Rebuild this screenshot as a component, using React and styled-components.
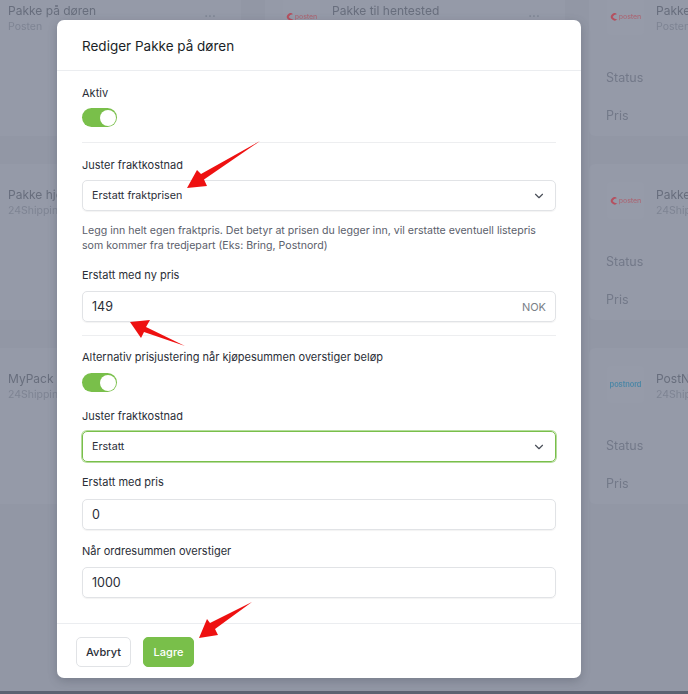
import styled, { createGlobalStyle } from "styled-components";
import { ChevronDown } from "lucide-react";

const GlobalStyle = createGlobalStyle`
  html, body {
    margin: 0;
    padding: 0;
    height: 100%;
    overflow: hidden;
    background: #9297a5;
  }
  * {
    box-sizing: border-box;
  }
`;

const Page = styled.div`
  position: relative;
  width: 688px;
  height: 694px;
  overflow: hidden;
  background: #9297a5;
  font-family: Inter, "Liberation Sans", sans-serif;
`;

const CardGrid = styled.div`
  display: grid;
  grid-template-columns: repeat(3, 300px);
  grid-auto-rows: 156px;
  gap: 28px 24px;
  width: 948px;
  height: 711px;
  margin: -20px 0 0 -59px;
  filter: blur(0.5px);
`;

const BottomBand = styled.div`
  height: 3px;
  background: #5c6271;
`;

const Card = styled.div`
  background: #959aa8;
  border-radius: 6px;
`;

const CardHead = styled.div`
  display: flex;
  align-items: flex-start;
  height: 84px;
  padding: 18px 18px 0;
`;

const LogoBox = styled.div`
  display: flex;
  align-items: center;
  justify-content: center;
  gap: 1px;
  flex: none;
  width: 37px;
  height: 37px;
  margin-right: 12px;
  background: #969ba9;
  border-radius: 4px;
`;

const LogoText = styled.span`
  font-size: ${(p) => p.$size}px;
  font-weight: ${(p) => p.$weight};
  letter-spacing: -0.1px;
  color: ${(p) => p.$color};
`;

const CardTitles = styled.div`
  flex: 1;
  min-width: 0;
  padding-top: 5px;
`;

const CardTitle = styled.div`
  font-size: 12px;
  line-height: 16px;
  color: #686e7d;
  white-space: nowrap;
`;

const CardSub = styled.div`
  margin-top: 1px;
  font-size: 10.5px;
  line-height: 14px;
  color: #7e8493;
  white-space: nowrap;
`;

const Dots = styled.div`
  flex: none;
  margin: 13px 7px 0 0;
  font-size: 6px;
  line-height: 10px;
  letter-spacing: 0.5px;
  color: #7e8493;
`;

const CardMeta = styled.div`
  padding: 6px 17px 0;
  font-size: 12.5px;
  line-height: 16px;
  color: #737989;
`;

const MetaRow = styled.div`
  margin-bottom: 22px;
`;

const Modal = styled.div`
  position: absolute;
  left: 57px;
  top: 20px;
  width: 524px;
  height: 658px;
  background: #fff;
  border-radius: 7px;
  box-shadow: 0 3px 10px rgba(60, 65, 80, 0.3);
`;

const ModalHeader = styled.div`
  display: flex;
  align-items: center;
  height: 51px;
  padding: 2px 25px 0;
  border-bottom: 1px solid #ebedf0;
  font-size: 13.5px;
  color: #1b1f27;
`;

const ModalBody = styled.div`
  height: 552px;
  padding: 14px 25px 0;
`;

const Field = styled.div`
  margin-top: ${(p) => p.$top || 0}px;
`;

const Label = styled.div`
  margin-bottom: ${(p) => p.$gap || 8}px;
  font-size: 11px;
  line-height: 16px;
  color: #2a2e37;
  white-space: nowrap;
`;

const Toggle = styled.div`
  display: flex;
  justify-content: flex-end;
  align-items: center;
  width: 35px;
  height: 19px;
  padding: 1px;
  border-radius: 10px;
  background: #79bf4a;
`;

const ToggleKnob = styled.div`
  width: 16px;
  height: 16px;
  border-radius: 50%;
  background: #fff;
`;

const Divider = styled.div`
  height: 1px;
  margin: ${(p) => p.$top}px 0 ${(p) => p.$bottom}px;
  background: #edeef0;
`;

const SelectBox = styled.div`
  display: flex;
  align-items: center;
  justify-content: space-between;
  width: 474px;
  height: 31px;
  padding: 0 9px;
  border: 1px solid ${(p) => (p.$focused ? "#79bf4a" : "#e1e3e6")};
  border-radius: 5px;
  box-shadow: ${(p) => (p.$focused ? "0 0 0 1px rgba(121, 191, 74, 0.55)" : "0 1px 1px rgba(0, 0, 0, 0.05)")};
  font-size: 10.7px;
  color: #2a2e37;
`;

const InputBox = styled.div`
  display: flex;
  align-items: center;
  width: 474px;
  height: 31px;
  padding: 0 9px;
  border: 1px solid #e1e3e6;
  border-radius: 5px;
  box-shadow: 0 1px 1px rgba(0, 0, 0, 0.05);
`;

const ValueInput = styled.input`
  flex: 1;
  min-width: 0;
  padding: 0;
  border: none;
  outline: none;
  background: transparent;
  font-family: inherit;
  font-size: 12.5px;
  color: #2a2e37;
`;

const Suffix = styled.span`
  font-size: 11px;
  color: #7b7f88;
`;

const HelpText = styled.p`
  margin: 12px 0 14px;
  font-size: 10.6px;
  line-height: 15px;
  color: #5b606b;
`;

const ModalFooter = styled.div`
  display: flex;
  align-items: flex-start;
  gap: 12px;
  padding: 13px 19px;
  border-top: 1px solid #ebedf0;
`;

const Button = styled.button`
  height: 30px;
  padding: 0;
  width: ${(p) => p.$width}px;
  border: 1px solid ${(p) => (p.$primary ? "#79bf4a" : "#e1e3e6")};
  border-radius: 5px;
  background: ${(p) => (p.$primary ? "#79bf4a" : "#fff")};
  color: ${(p) => (p.$primary ? "#fff" : "#2a2e37")};
  font-family: inherit;
  font-size: 11px;
  font-weight: 500;
`;

const ArrowSvg = styled.svg`
  position: absolute;
  left: 0;
  top: 0;
  width: 688px;
  height: 694px;
  pointer-events: none;
`;

const cards = [
  { title: "Pakke på døren", sub: "Posten", logo: "posten" },
  { title: "Pakke til hentested", sub: "Posten", logo: "posten" },
  { title: "Pakke i postkassen", sub: "Posten", logo: "posten" },
  { title: "Pakke hjem", sub: "24Shipping", logo: "posten" },
  { title: "Pakke til hentested", sub: "24Shipping", logo: "posten" },
  { title: "Pakke i postkassen", sub: "24Shipping", logo: "posten" },
  { title: "MyPack Home", sub: "24Shipping", logo: "posten" },
  { title: "MyPack Collect", sub: "24Shipping", logo: "postnord" },
  { title: "PostNord Hjem", sub: "24Shipping", logo: "postnord" },
];

function Logo({ name }) {
  if (name === "postnord") {
    return (
      <LogoBox>
        <LogoText $color="#4d87a6" $size={7.5} $weight={600}>postnord</LogoText>
      </LogoBox>
    );
  }
  return (
    <LogoBox>
      <svg width="8" height="8" viewBox="0 0 8 8">
        <path d="M7 1.2A3.6 3.6 0 1 0 7.4 6 4.6 4.6 0 0 1 2.6 4 4.6 4.6 0 0 1 7 1.2Z" fill="#b5505f" />
      </svg>
      <LogoText $color="#a96a78" $size={7} $weight={500}>posten</LogoText>
    </LogoBox>
  );
}

function App() {
  return (
    <Page>
      <GlobalStyle />
      <CardGrid>
        {cards.map((card, index) => (
          <Card key={index}>
            <CardHead>
              <Logo name={card.logo} />
              <CardTitles>
                <CardTitle>{card.title}</CardTitle>
                <CardSub>{card.sub}</CardSub>
              </CardTitles>
              <Dots>•••</Dots>
            </CardHead>
            <CardMeta>
              <MetaRow>Status</MetaRow>
              <MetaRow>Pris</MetaRow>
            </CardMeta>
          </Card>
        ))}
      </CardGrid>
      <BottomBand />

      <Modal>
        <ModalHeader>Rediger Pakke på døren</ModalHeader>
        <ModalBody>
          <Label $gap={7}>Aktiv</Label>
          <Toggle>
            <ToggleKnob />
          </Toggle>
          <Divider $top={15} $bottom={14} />

          <Label $gap={7}>Juster fraktkostnad</Label>
          <SelectBox>
            Erstatt fraktprisen
            <ChevronDown size={14} color="#4a4f59" />
          </SelectBox>
          <HelpText>
            Legg inn helt egen fraktpris. Det betyr at prisen du legger inn, vil erstatte eventuell listepris
            <br />
            som kommer fra tredjepart (Eks: Bring, Postnord)
          </HelpText>

          <Label>Erstatt med ny pris</Label>
          <InputBox>
            <ValueInput defaultValue="149" />
            <Suffix>NOK</Suffix>
          </InputBox>
          <Divider $top={13} $bottom={13} />

          <Label>Alternativ prisjustering når kjøpesummen overstiger beløp</Label>
          <Toggle>
            <ToggleKnob />
          </Toggle>

          <Field $top={16}>
            <Label $gap={7}>Juster fraktkostnad</Label>
            <SelectBox $focused>
              Erstatt
              <ChevronDown size={14} color="#4a4f59" />
            </SelectBox>
          </Field>

          <Field $top={12}>
            <Label $gap={9}>Erstatt med pris</Label>
            <InputBox>
              <ValueInput defaultValue="0" />
            </InputBox>
          </Field>

          <Field $top={13}>
            <Label>Når ordresummen overstiger</Label>
            <InputBox>
              <ValueInput defaultValue="1000" />
            </InputBox>
          </Field>
        </ModalBody>
        <ModalFooter>
          <Button $width={55}>Avbryt</Button>
          <Button $primary $width={51}>Lagre</Button>
        </ModalFooter>
      </Modal>

      {/* red annotation arrows on top of the screenshot */}
      <ArrowSvg viewBox="0 0 688 694">
        <polygon points="260,141 204,179.5 207,186 187,188 197,170 201,174" fill="#ee1111" />
        <polygon points="130,322 150,320 146,327 185,346 144,332 141,338" fill="#ee1111" />
        <polygon points="252,602 215,629 218,635 199,638 207,619 210,623" fill="#ee1111" />
      </ArrowSvg>
    </Page>
  );
}

export default App;
